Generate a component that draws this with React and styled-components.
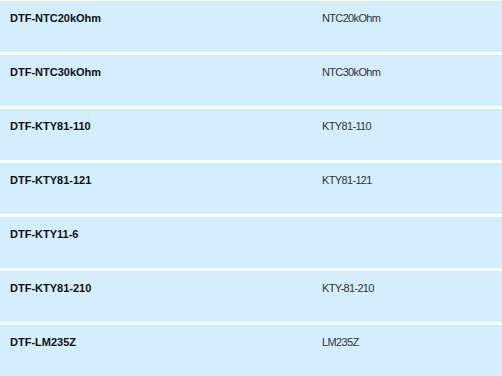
import React from "react";
import styled, { createGlobalStyle } from "styled-components";

const Global = createGlobalStyle`
  body {
    margin: 0;
    background: #fff;
    font-family: "Liberation Sans", Arial, sans-serif;
  }
`;

const List = styled.div`
  display: flex;
  flex-direction: column;
  gap: 3px;
  padding-top: 1px;
`;

const Row = styled.div`
  display: grid;
  grid-template-columns: 312px 1fr;
  height: 51px;
  background: #d4eefe;
  flex-shrink: 0;
`;

const Cell = styled.div`
  padding: 10px 10px 0;
  font-size: 11px;
  line-height: 14px;
  color: ${(p) => (p.strong ? "#111" : "#333")};
  font-weight: ${(p) => (p.strong ? 700 : 400)};
  letter-spacing: ${(p) => (p.strong ? "0" : "-0.65px")};
`;

const rows = [
  ["DTF-NTC20kOhm", "NTC20kOhm"],
  ["DTF-NTC30kOhm", "NTC30kOhm"],
  ["DTF-KTY81-110", "KTY81-110"],
  ["DTF-KTY81-121", "KTY81-121"],
  ["DTF-KTY11-6", ""],
  ["DTF-KTY81-210", "KTY-81-210"],
  ["DTF-LM235Z", "LM235Z"],
];

export default function App() {
  return (
    <>
      <Global />
      <List>
        {rows.map(([name, type]) => (
          <Row key={name}>
            <Cell strong>{name}</Cell>
            <Cell>{type}</Cell>
          </Row>
        ))}
      </List>
    </>
  );
}
